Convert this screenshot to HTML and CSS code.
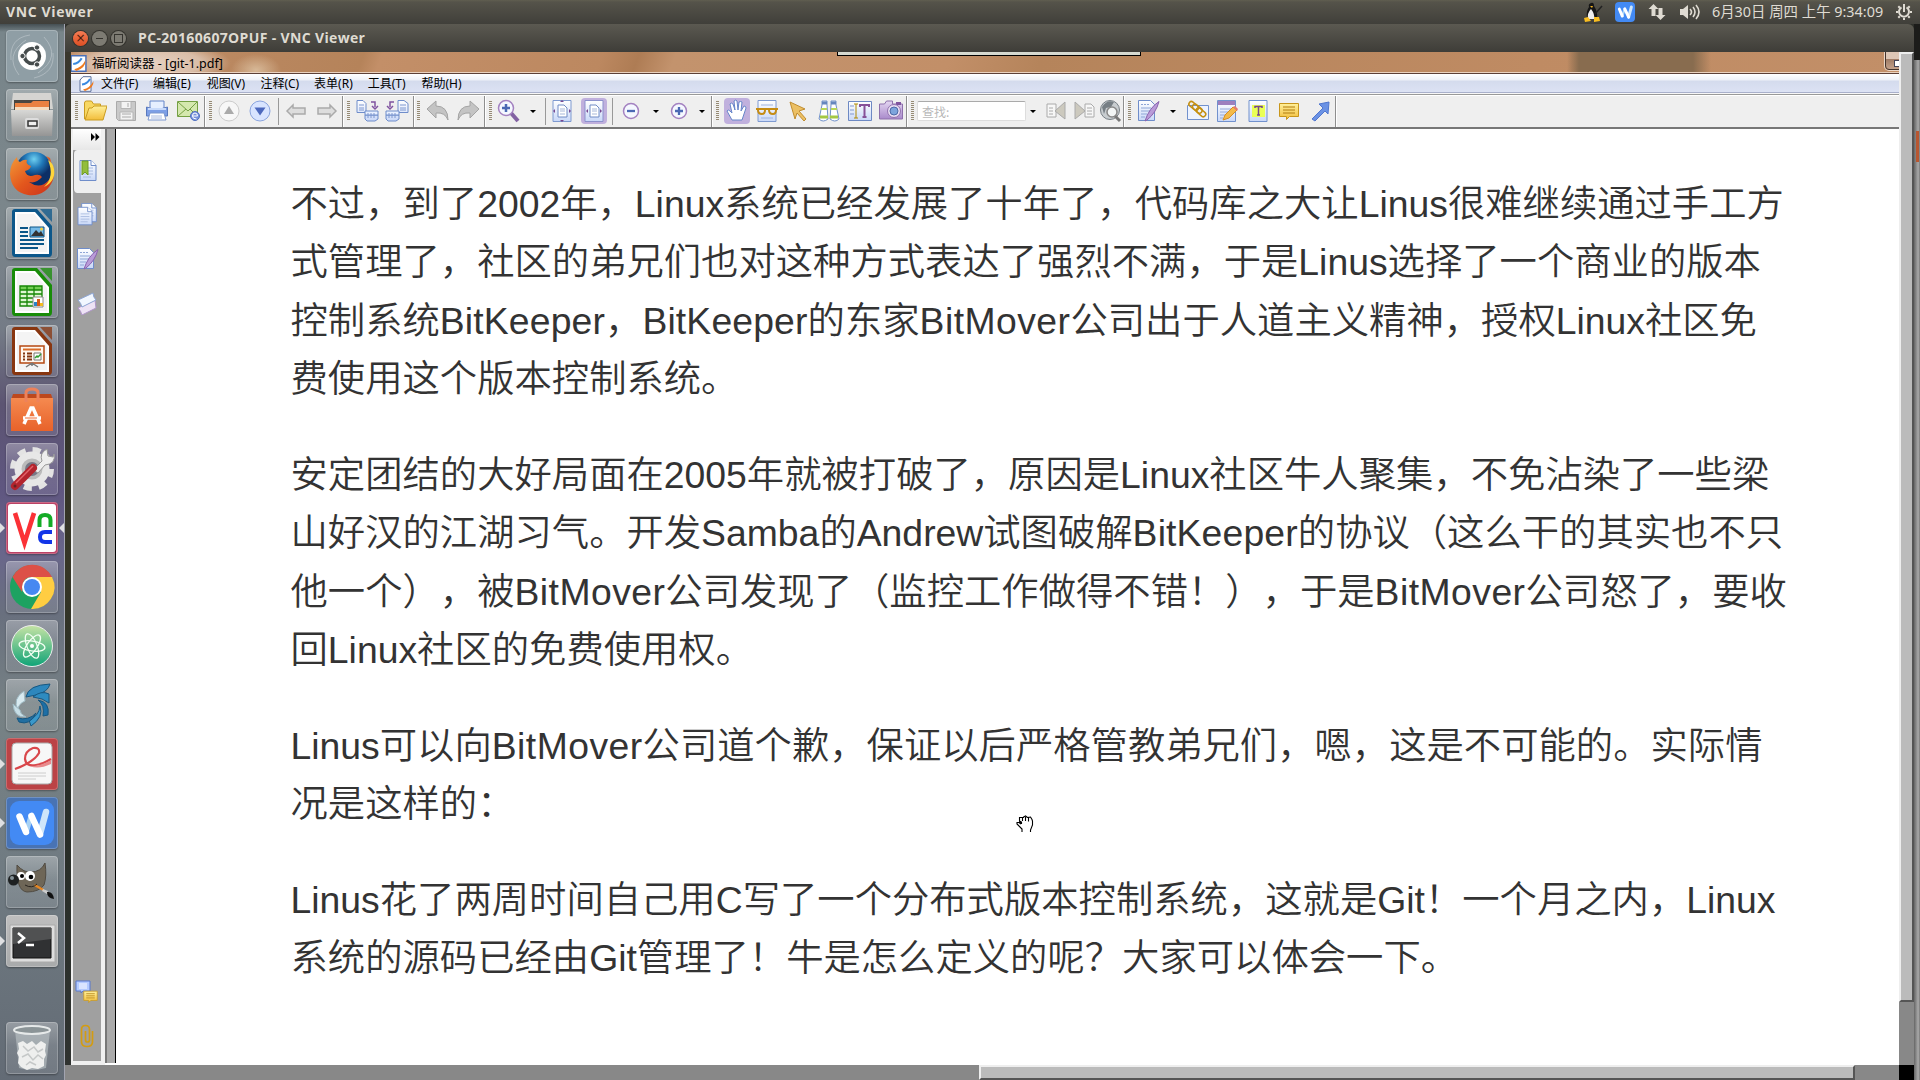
FILE: index.html
```html
<!DOCTYPE html>
<html lang="zh-CN">
<head>
<meta charset="utf-8">
<title>VNC Viewer</title>
<link rel="stylesheet" href="styles.css">
</head>
<body>
<svg class="defs" width="0" height="0">
  <defs>
    <linearGradient id="gBlue" x2="0" y2="1"><stop stop-color="#fff"/><stop offset="1" stop-color="#c9d8f8"/></linearGradient>
    <linearGradient id="gGold" x2="0" y2="1"><stop stop-color="#fff09a"/><stop offset="1" stop-color="#f2bd3a"/></linearGradient>
    <linearGradient id="gViolet" x2="0" y2="1"><stop stop-color="#e4d6f2"/><stop offset="1" stop-color="#a98acb"/></linearGradient>
    <linearGradient id="gOrange" x2="0" y2="1"><stop stop-color="#f58a50"/><stop offset="1" stop-color="#e8622a"/></linearGradient>
    <linearGradient id="gFox" x1="0" y1="0" x2="1" y2="1"><stop stop-color="#f39b38"/><stop offset=".5" stop-color="#e3571d"/><stop offset="1" stop-color="#c9301b"/></linearGradient>
    <radialGradient id="gGlobe" cx=".5" cy=".2"><stop stop-color="#6fd0f0"/><stop offset=".5" stop-color="#2078b8"/><stop offset="1" stop-color="#0c2f66"/></radialGradient>
    <linearGradient id="gAtom" x2="0" y2="1"><stop stop-color="#c5e3a4"/><stop offset="1" stop-color="#0fa377"/></linearGradient>
    <linearGradient id="gSteel" x2="0" y2="1"><stop stop-color="#d8d8d6"/><stop offset="1" stop-color="#959595"/></linearGradient>
    <symbol id="page" viewBox="0 0 24 24"><path d="M4 1.500h11l5 5v15H4z" fill="url(#gBlue)" stroke="#6f8dca"/><path d="M15 1.500v5h5" fill="#fff" stroke="#6f8dca"/><path d="M7 9h10M7 12h10M7 15h10M7 18h8" stroke="#a9bce0"/></symbol>
    <symbol id="pen" viewBox="0 0 24 24"><path d="M2.500 1.500h12l4 4v16h-16z" fill="url(#gBlue)" stroke="#6f8dca"/><path d="M5 5.500h2m1 0h2m1 0h2M5 9h10M5 12h9M5 15h6M5 18h4" stroke="#8fa6d6"/><path d="M23 2.500Q13 9 9 22l2-1Q20 14 23 2.500" fill="#b99bd8" stroke="#8a62ae"/></symbol>
    <symbol id="note" viewBox="0 0 24 24"><path d="M2.500 4.500h19v13h-9l-3 3v-3h-7z" fill="url(#gGold)" stroke="#c8961b"/><path d="M6 8h12M6 11h12M6 14h12" stroke="#b07d10"/></symbol>
    <symbol id="foxit" viewBox="0 0 16 16"><path d="M1 .700h14v14.600H1z" fill="#fff" stroke="#4a70b8" stroke-width="1.400"/><path d="M3 8.500Q8 8 11 3" fill="none" stroke="#3a8ae0" stroke-width="2"/><path d="M4 13.500Q11 12 14.500 5Q15 12 6 15" fill="#f07a1e"/></symbol>
    <symbol id="foxdoc" viewBox="0 0 16 16"><path d="M5 .700h8v14.600H2V4z" fill="#fff" stroke="#5b6f9a"/><path d="M4 8.500Q9 8 12 3" fill="none" stroke="#3a8ae0" stroke-width="2"/><path d="M5 13.500Q12 12 15.500 5Q16 12 7 15" fill="#f07a1e"/></symbol>
    <symbol id="sheet" viewBox="0 0 52 52"><path d="M9 2h22l15 17v27q0 4-3 4H9q-3 0-3-4V5q0-3 3-3z" fill="currentColor"/><path d="M9 5h20l14 16v26H9z" fill="#fff"/><path d="M11 7h17l13 15v23H11z" fill="#f4f4f4"/><path d="M34 2h12v13z" fill="currentColor" opacity=".75"/></symbol>
    <symbol id="wps" viewBox="0 0 44 44"><rect width="44" height="44" rx="9" fill="#438af4"/><path d="M16 32l5-17" stroke="#a8d2f5" stroke-width="5"/><path d="M9.500 15.500L16 31" stroke="#fff" stroke-width="6.500" stroke-linecap="round"/><path d="M30 33l6-22" stroke="#cfe6fa" stroke-width="6.500" stroke-linecap="round"/><path d="M21.500 15L30 33.500" stroke="#fff" stroke-width="6.500" stroke-linecap="round"/></symbol>
  </defs>
</svg>

<header class="panel">
  <span class="panel-title">VNC Viewer</span>
  <div class="indicators">
    <svg width="20" height="21" viewBox="0 0 20 21"><path d="M8 1q3-1 3 3 4 6 3 12H4Q3 9 6 5 5 2 8 1" fill="#151515"/><path d="M8 7q4 5 3 10H5Q4 11 8 7" fill="#eee"/><path d="M7 4h3l-1 2z" fill="#f5b622"/><path d="M1 16l4-1 3 4-6 1zM11 15h5l1 4-6 1z" fill="#f8bd21"/><path d="M12 12l7-8" stroke="#222" stroke-width="1.500"/></svg>
    <svg width="20" height="20"><use href="#wps"/></svg>
    <svg width="18" height="18" viewBox="0 0 18 18" fill="#dfdbd2"><path d="M5.500 1l5 5H7.500v7H3.500V6H.5zM12.500 17l-5-5h3V5h4v7h3z"/></svg>
    <svg width="20" height="18" viewBox="0 0 20 18"><path d="M0 6h3l5-4v14l-5-4H0z" fill="#dfdbd2"/><path d="M10 6q3 3 0 6M13 4q4 5 0 10M16 2q6 7 0 14" fill="none" stroke="#dfdbd2" stroke-width="1.600"/></svg>
    <span class="clock">6月30日 周四 上午 9:34:09</span>
    <svg width="18" height="18" viewBox="0 0 18 18" fill="none" stroke="#dfdbd2"><path d="M6.500 4.300a5 5 0 1 0 5 0M9 1v8" stroke-width="2"/><path d="M1 9h2m12 0h2M9 15v2M3.300 3.300l1.500 1.500m9.900-1.500l-1.500 1.500M3.300 14.700l1.500-1.500m9.900 1.500l-1.500-1.500" stroke-width="2"/></svg>
  </div>
</header>

<div class="desktop">
  <nav class="launcher">
    <div class="tile dash"><svg viewBox="0 0 52 52"><path d="M5 30Q3 8 24 5M47 23q2 20-19 25M13 45Q-2 25 20 10M38 7q18 20-6 36" fill="none" stroke="#c1cace" opacity=".6"/><circle cx="26" cy="26" r="14" fill="#fff"/><circle cx="26" cy="26" r="7.500" fill="none" stroke="#454b4c" stroke-width="3.500"/><g fill="#454b4c" stroke="#fff"><circle cx="16.500" cy="26" r="2.700"/><circle cx="31" cy="17.500" r="2.700"/><circle cx="31" cy="34.500" r="2.700"/></g></svg></div>
    <div class="tile"><svg viewBox="0 0 52 52"><path d="M7 4h38l2 16H5z" fill="#d5d4d1"/><path d="M8 11h36v12H8z" fill="#4a4641"/><path d="M9 14h16l2-2h16v10H9z" fill="#e98142"/><path d="M9 18h34v5H9z" fill="#f4dcc0"/><path d="M5 21h42l-1 26H6z" fill="url(#gSteel)"/><rect x="19" y="29" width="14" height="11" rx="2" fill="#ddd"/><path d="M22 32h9v5h-9z" fill="#eee" stroke="#333" stroke-width="1.500"/></svg></div>
    <div class="tile"><svg viewBox="0 0 52 52"><circle cx="28" cy="22" r="18" fill="url(#gGlobe)"/><path d="M40 8Q51 20 47 32 40 49 22 47 5 44 4 26 4 16 11 9q0 4 3 5 4-3 7-2-2 4 4 6-1 4-6 5 2 7 10 4 5-1 7 2-6 7-13 5 11 8 20-2 6-8 1-22z" fill="url(#gFox)"/><path d="M42 12q7 17-4 27 12-6 10-18-1-6-6-9" fill="#ffd63b"/></svg></div>
    <div class="tile writer"><svg viewBox="0 0 52 52"><use href="#sheet"/><path d="M14 21h8M14 25h8M14 29h8M14 33h24M14 37h24M14 41h18" stroke="#0a5688" stroke-width="2"/><path d="M24 20h14v10H24z" fill="#76bbe8" stroke="#0a5688"/><path d="M25 29l5-6 3 3 2-2 3 5z" fill="#333"/><circle cx="35.500" cy="22" r="1.500" fill="#f5cf3b"/></svg></div>
    <div class="tile calc"><svg viewBox="0 0 52 52"><use href="#sheet"/><path d="M14 20h22v20H14z" fill="#dff7d2"/><path d="M14 20h22v4H14z" fill="#73ce54"/><path d="M14 20h22v20H14zM14 24h22M14 28h22M14 32h22M14 36h22M21 20v20M28 20v20" fill="none" stroke="#168605" stroke-width="1.300"/><path d="M27 31h10v10H27z" fill="#fff" stroke="#888"/><path d="M28 36h3v4h-3z" fill="#2a82c8"/><path d="M31 33h3v7h-3z" fill="#d85a16"/><path d="M34 37h3v3h-3z" fill="#f3bb22"/></svg></div>
    <div class="tile impress"><svg viewBox="0 0 52 52"><use href="#sheet"/><path d="M14 21h24v17H14z" fill="#fff7ef" stroke="#b54812" stroke-width="1.500"/><path d="M17 24.500h18" stroke="#d96c2a" stroke-width="2"/><path d="M17 28.500h2m2 0h5M17 31.500h2m2 0h5M17 34.500h2m2 0h5" stroke="#81350f" stroke-width="2"/><path d="M28 28h7v7h-7z" fill="#fff" stroke="#777"/><path d="M29 33l2-2 1 1 3-3" fill="none" stroke="#2f9c2f" stroke-width="1.500"/><path d="M26 38l-6 4m6-4l6 4m-6-4v3" stroke="#777" stroke-width="1.500"/></svg></div>
    <div class="tile"><svg viewBox="0 0 52 52"><path d="M7 10h38l2 6H5z" fill="#bd481d"/><path d="M5 14h42v33H5z" fill="url(#gOrange)"/><path d="M20 18V9q0-4 6-4t6 4v9" fill="none" stroke="#ed825b" stroke-width="3"/><path d="M17 34h18M18 40l7-16h2l7 16" fill="none" stroke="#fff" stroke-width="3.500"/><path d="M19 34h12" stroke="#f06c36"/></svg></div>
    <div class="tile"><svg viewBox="0 0 52 52"><circle cx="26" cy="26" r="19" fill="none" stroke="#e3e3e3" stroke-width="6" stroke-dasharray="8 6.920"/><circle cx="26" cy="26" r="14" fill="#bbb" stroke="#e7e7e7" stroke-width="7"/><circle cx="26" cy="26" r="7" fill="#777785"/><path d="M27 27l9-9q-3-8 5-12l1 7 5 1 1-3q2 10-9 11l-7 8z" fill="#eee" stroke="#999"/><path d="M9 43l18-18" stroke="#b3242d" stroke-width="8" stroke-linecap="round"/><path d="M10 40l17-17" stroke="#e4636a" stroke-width="1.500"/><circle cx="9" cy="43" r="1.500" fill="#622"/></svg></div>
    <div class="tile vnc running active"><svg viewBox="0 0 52 52"><rect x="2" y="2" width="48" height="48" rx="3" fill="#fff"/><path d="M9 11l9.500 30L28 11" fill="none" stroke="#fb3136" stroke-width="4.600"/><path d="M33.500 25v-7q0-5 5.500-5t5.500 5v7" fill="none" stroke="#14ab26" stroke-width="4"/><path d="M46 30h-7q-5 0-5 5t5 5h7" fill="none" stroke="#1235e8" stroke-width="4"/></svg></div>
    <div class="tile"><svg viewBox="0 0 52 52"><circle cx="26" cy="26" r="22" fill="#1da261"/><path d="M26 16h20a22 22 0 0 1-21 32l10-17z" fill="#ffcd42"/><path d="M6.500 16A22 22 0 0 1 46 16H26q-7 0-9 6l-1 9z" fill="#dc5047"/><circle cx="26" cy="26" r="10" fill="#fff"/><circle cx="26" cy="26" r="8" fill="#4688f1"/></svg></div>
    <div class="tile"><svg viewBox="0 0 52 52"><circle cx="26" cy="26" r="20.500" fill="url(#gAtom)" stroke="#eee"/><g fill="none" stroke="#f3fff3" stroke-width="1.300"><ellipse cx="26" cy="26" rx="13" ry="5" transform="rotate(8 26 26)"/><ellipse cx="26" cy="26" rx="13" ry="5" transform="rotate(68 26 26)"/><ellipse cx="26" cy="26" rx="13" ry="5" transform="rotate(125 26 26)"/></g><circle cx="26" cy="26" r="2" fill="#fff"/></svg></div>
    <div class="tile"><svg viewBox="0 0 52 52" stroke="#175780"><path d="M20 18Q22 6 44 5q-2 8-14 11z" fill="#2d87bd"/><path d="M27 18q8-7 16-3v9q-6-5-16-6" fill="#2e8bc0"/><path d="M32 21q12 2 10 15l-5 1q2-11-5-16" fill="#1d6fa6"/><path d="M34 27q4 11-9 20l-2-6q10-4 11-14" fill="#3998ca"/><path d="M30 34Q24 47 13 43l-2-4q12 3 19-5" fill="#226fa1"/><path d="M18 12q-12 8-6 19 0-6 7-9z" fill="#d8eaf0" stroke="#9eb9c3"/><path d="M7 25q1 14 13 13-6-3-6-7z" fill="#c7dee6" stroke="#9eb9c3"/></svg></div>
    <div class="tile red running"><svg viewBox="0 0 52 52"><rect x="6" y="5" width="40" height="41" rx="4" fill="#f7f7f7" stroke="#aaa"/><path d="M9 31Q28 24 33 15q1-6-6-5-8 3-8 11 1 8 11 6 7-1 15-6" fill="none" stroke="#d9474b" stroke-width="2.200"/><path d="M24 28q9 1 21-6v4q-13 6-21 2" fill="#e88a8c"/><path d="M12 35h28M12 38h28M12 41h18" stroke="#ccc"/></svg></div>
    <div class="tile blue running"><svg viewBox="-4 -4 52 52"><use href="#wps" width="44" height="44"/></svg></div>
    <div class="tile"><svg viewBox="0 0 52 52"><path d="M11 9q7 8 14 7 10 0 14-9 2 13-1 22-5 7-17 7-11-1-10-27" fill="#6e6657" stroke="#504b42"/><circle cx="15" cy="20" r="4" fill="#fff"/><circle cx="24" cy="20" r="5" fill="#fff"/><circle cx="16" cy="20" r="2"/><circle cx="25" cy="21" r="2.300"/><circle cx="7.500" cy="24" r="5.500" fill="#1d2021"/><circle cx="6" cy="22" r="2" fill="#839096"/><path d="M29 28l9 5-1 2-9-5z" fill="#e88721"/><path d="M37 33l5 2-1 3-5-3z" fill="#ccc"/><path d="M41 36q6-1 7 7-7-1-7-7" fill="#101010"/><path d="M19 29q7 4 12-1" fill="none" stroke="#28241f"/></svg></div>
    <div class="tile term running"><svg viewBox="0 0 52 52"><path d="M4 10h45v37H4z" fill="#ddd" stroke="#aaa"/><path d="M7 13h38v30H7z" fill="#303133" stroke="#111"/><path d="M7 13h38v11L7 29z" fill="#505152"/><path d="M12 18l6 5-6 5M20 30h8" fill="none" stroke="#fff" stroke-width="2.500"/></svg></div>
    <div class="tile trash"><svg viewBox="0 0 52 52"><path d="M9 8l4 38q13 4 27 0l4-38" fill="#bac2c4" opacity=".65"/><ellipse cx="26" cy="8" rx="18" ry="4" fill="#8b9497" stroke="#e6e9e9" stroke-width="2"/><path d="M12 21l5-2 4 3 5-3 4 4 5-4 5 3-1 7 1 4-2 4v7l-6 3-6-1-5 2-6-3-3-4 1-6-2-4 2-4z" fill="#eeefee"/><path d="M17 24l5 5 6-4 4 5 5-3M16 35l6-3 5 6 5-5 5 4M20 43l4-3 6 3" fill="none" stroke="#c5c8c8" stroke-width="1.500"/></svg></div>
  </nav>

  <main class="window">
    <div class="titlebar"><i class="wb close"></i><i class="wb min"></i><i class="wb max"></i><span class="window-title">PC-20160607OPUF - VNC Viewer</span></div>
    <div class="viewport">
      <div class="remote">
        <div class="caption"><svg width="17" height="17"><use href="#foxit"/></svg><span>福昕阅读器 - [git-1.pdf]</span><i class="handle"></i><i class="minbtn"></i></div>
        <div class="menubar"><svg width="16" height="16"><use href="#foxdoc"/></svg><span>文件(F)</span><span>编辑(E)</span><span>视图(V)</span><span>注释(C)</span><span>表单(R)</span><span>工具(T)</span><span>帮助(H)</span></div>
        <div class="toolbar">
          <div class="group g1"><i class="grip"></i>
            <svg viewBox="0 0 24 24"><path d="M1.500 20V4q0-2 2-2h5l2 3h7v4" fill="#f8d862" stroke="#c99b20"/><path d="M2 21l4-12h3l2-2h13l-4 14z" fill="url(#gGold)" stroke="#c99b20"/></svg>
            <svg viewBox="0 0 24 24"><path d="M2.500 2.500h19v19h-17l-2-2z" fill="#c9c9c9" stroke="#aaa"/><path d="M7 2.500h10v7H7zM6 13h13v8H6z" fill="#f3f3f3" stroke="#b5b5b5"/><path d="M14 4v4M8 15h9M8 18h9" stroke="#aaa"/></svg>
            <svg viewBox="0 0 24 24"><path d="M5 2h14v8H5z" fill="#e6efff" stroke="#6585c8"/><path d="M1.500 8q10 4 21 0v9h-21z" fill="#7d9fe6" stroke="#5a79bd"/><path d="M3 10h18" stroke="#c8dafa" stroke-width="2"/><path d="M5 14h14l2 7H3z" fill="#fff" stroke="#7c97cf"/><path d="M6 17h11M6 19h11" stroke="#aabbe0"/></svg>
            <svg viewBox="0 0 24 24"><path d="M1.500 2.500h20v15h-20z" fill="#d5e8ae" stroke="#75a044"/><path d="M2 3l10 9 9-9M2 17l8-7m11 7l-7-7" fill="none" stroke="#75a044"/><circle cx="19" cy="17" r="4.500" fill="#7792dc" stroke="#4f6fbe"/><path d="M16.500 17h5q0-3-2.500-3t-2.500 3 4 3" fill="none" stroke="#fff"/></svg>
          </div>
          <div class="group g2"><i class="grip"></i>
            <svg viewBox="0 0 24 24"><circle cx="12" cy="12" r="10" fill="#f7f7f7" stroke="#ccc"/><path d="M7 15l5-8 5 8z" fill="#aaa"/></svg>
            <svg viewBox="0 0 24 24"><circle cx="12" cy="12" r="10" fill="#d8e4ff" stroke="#8aa4de"/><path d="M6.500 8.500h11L12 16.500z" fill="#4c68bd"/></svg><i class="rule"></i>
            <svg viewBox="0 0 24 24"><path d="M3 12l6-6v3h12v6H9v3z" fill="#ddd" stroke="#aaa" stroke-width="1.500"/></svg>
            <svg viewBox="0 0 24 24"><path d="M21 12l-6-6v3H3v6h12v3z" fill="#ddd" stroke="#aaa" stroke-width="1.500"/></svg>
          </div>
          <div class="group g3"><i class="grip"></i>
            <svg viewBox="0 0 24 24"><path d="M2 1.500h6l3 3v9H2zM10 16h13v4l-3 2h-8l-2-2z" fill="url(#gBlue)" stroke="#6f8dca"/><path d="M10 12h13v4H10z" fill="#e8f0ff" stroke="#6f8dca"/><path d="M4 6h5M4 9h5M4 11h5M13 14v5m3-5v5m3-5v5" stroke="#7e98d0"/><path d="M16 3h4v5m-3-1l3 3 3-3" fill="none" stroke="#8053a0" stroke-width="1.500"/></svg>
            <svg viewBox="0 0 24 24"><path d="M13 1.500h6l4 3v9H13zM1 16h13v4l-3 2H3l-2-2z" fill="url(#gBlue)" stroke="#6f8dca"/><path d="M1 12h13v4H1z" fill="#e8f0ff" stroke="#6f8dca"/><path d="M15 6h6M15 9h6M15 11h6M4 14v5m3-5v5m3-5v5" stroke="#7e98d0"/><path d="M9 3H5v5m3-1l-3 3-3-3" fill="none" stroke="#8053a0" stroke-width="1.500"/></svg>
          </div>
          <div class="group g4"><i class="grip"></i>
            <svg viewBox="0 0 24 24"><path d="M1 10l9-8v5q12 0 12 14-3-8-12-7v5z" fill="#c4c4c4" stroke="#a4a4a4"/></svg>
            <svg viewBox="0 0 24 24"><path d="M23 10l-9-8v5Q2 7 2 21q3-8 12-7v5z" fill="#c4c4c4" stroke="#a4a4a4"/></svg>
          </div>
          <div class="group g5"><i class="grip"></i>
            <svg viewBox="0 0 24 24"><path d="M14 14l7 8" stroke="#8261a2" stroke-width="4"/><circle cx="9" cy="9" r="7.500" fill="#f5f8ff" stroke="#a482c1" stroke-width="1.500"/><path d="M5 9h8M9 5v8" stroke="#4b69b4" stroke-width="2.500"/></svg><i class="caret"></i><i class="rule"></i>
            <svg viewBox="0 0 24 24"><path d="M3 1.500h18v21H3z" fill="url(#gBlue)" stroke="#7e9ad0"/><path d="M8 6h6l3 3v9H8z" fill="#fff" stroke="#718cc5"/><path d="M10 10h5M10 12h5M10 15h5" stroke="#a7b8d9"/><path d="M10 3h4l-2-2zM10 21h4l-2 2zM5 10v4l-2-2zM19 10v4l2-2z" fill="#774991"/></svg>
            <svg class="on" viewBox="0 0 24 24"><path d="M3 1.500h18v21H3z" fill="url(#gBlue)" stroke="#8c91cc"/><path d="M8 6h6l3 3v9H8z" fill="#fff" stroke="#718cc5"/><path d="M10 10h5M10 12h5M10 15h5" stroke="#a7b8d9"/><path d="M6 10v4l-2-2zM18 10v4l2-2z" fill="#774991"/></svg><i class="rule"></i>
            <svg viewBox="0 0 24 24"><circle cx="12" cy="12" r="7.500" fill="#f5f8ff" stroke="#a482c1" stroke-width="1.500"/><path d="M8 12h8" stroke="#4b69b4" stroke-width="2.300"/></svg><i class="caret"></i>
            <svg viewBox="0 0 24 24"><circle cx="12" cy="12" r="7.500" fill="#f5f8ff" stroke="#a482c1" stroke-width="1.500"/><path d="M8 12h8M12 8v8" stroke="#4b69b4" stroke-width="2.300"/></svg><i class="caret"></i>
          </div>
          <div class="group g6"><i class="grip"></i>
            <svg class="on" viewBox="0 0 24 24"><path d="M7 21l-5-9q1-2 3 0l2 2L5 5q1-2 3 0l2 6-1-9q2-2 3 0l1 9 1-8q2-1 3 0l-1 9 3-5q2 0 2 2l-4 12z" fill="#fff" stroke="#6686c9"/></svg>
            <svg viewBox="0 0 24 24"><path d="M3 1.500h18v21H3z" fill="url(#gBlue)" stroke="#7e9ad0"/><path d="M6 6h12M6 19h12" stroke="#9fb4de"/><path d="M1 10h22M3 11q0 4 4 4 3 0 3-4m4 0q0 4 4 4 3 0 3-4" fill="none" stroke="#c58c13" stroke-width="2"/></svg>
            <svg viewBox="0 0 24 24"><path d="M4 3l15 7-6 2 7 8-2 2-7-8-2 6z" fill="#ecc064" stroke="#c18d30"/></svg>
            <svg viewBox="0 0 24 24"><path d="M5 2h5v4l1 14q-5 4-9 0L5 6zm9 0h5v4l3 14q-4 4-9 0l1-14z" fill="#fff" stroke="#7191ca"/><path d="M4 10h6M14 10h6" stroke="#b8d65b" stroke-width="2"/><path d="M3 18h8M13 18h8" stroke="#a4c845" stroke-width="3"/><path d="M5 4h5m4 0h5" stroke="#6586be" stroke-width="3"/></svg>
            <svg viewBox="0 0 24 24"><path d="M.5 2.500h23v19H.5z" fill="url(#gBlue)" stroke="#6d89c3"/><path d="M2 7h4M2 11h4M2 15h4" stroke="#8299cf"/><path d="M8 5v14M6 5h4M6 19h4" stroke="#b18a00"/><path d="M12 8V6h9v2m-4.500-2v12m-2 0h4" fill="none" stroke="#875198" stroke-width="2"/></svg>
            <svg viewBox="0 0 24 24"><path d="M.5 5h5l2-3h6v3h10v15H.5z" fill="url(#gViolet)" stroke="#8e71ac"/><path d="M17 3h5v3h-5z" fill="#80559f"/><circle cx="15" cy="12" r="6.500" fill="#e8ddf2" stroke="#9273ae"/><circle cx="15" cy="12" r="4" fill="#7da4dc" stroke="#4d6aa7"/></svg>
          </div>
          <div class="group g7"><i class="grip"></i><span class="search">查找:</span><i class="caret"></i>
            <svg viewBox="0 0 24 24"><path d="M3 5h9v13H3z" fill="#f7f7f7" stroke="#aaa"/><path d="M5 9h4M5 12h4M5 15h4" stroke="#aaa"/><path d="M11 12l10-9v17z" fill="#ccc9be" stroke="#aaa"/></svg>
            <svg viewBox="0 0 24 24"><path d="M13 5h6l3 3v10h-9z" fill="#f7f7f7" stroke="#aaa"/><path d="M15 9h5M15 12h5M15 15h5" stroke="#aaa"/><path d="M13 12L3 3v17z" fill="#ccc9be" stroke="#aaa"/></svg>
            <svg viewBox="0 0 24 24"><circle cx="12" cy="11" r="9.500" fill="#c8cdd0" stroke="#777f85"/><path d="M4 8q5-8 12-5l-3 5-5 1-2 6z" fill="#777f85"/><path d="M16 16l6 6" stroke="#777" stroke-width="3"/><circle cx="14" cy="13" r="5" fill="#f2f5f5" stroke="#888" stroke-width="1.500"/></svg>
          </div>
          <div class="group g8"><i class="grip"></i>
            <svg><use href="#pen"/></svg><i class="caret"></i>
            <svg viewBox="0 0 24 24"><path d="M1.500 6.500h21v14h-21z" fill="#edf3ff" stroke="#7191cd"/><g fill="none" stroke="#c59012" stroke-width="1.500"><rect x="2" y="4" width="11" height="5" rx="2.500" transform="rotate(40 7 7)"/><rect x="5.500" y="7" width="11" height="5" rx="2.500" transform="rotate(40 11 10)"/><rect x="9" y="11" width="11" height="5" rx="2.500" transform="rotate(40 15 14)"/></g></svg>
            <svg viewBox="0 0 24 24"><path d="M2.500 1.500h18v21h-18z" fill="url(#gBlue)" stroke="#7191cd"/><path d="M3 2h17v4H3z" fill="#9d7fbe"/><path d="M5 10h11M5 13h8M5 16h5M5 19h3" stroke="#94aada"/><path d="M8 21l2-5 8-8 4 3-8 8z" fill="#f4ba48" stroke="#d48f24"/><path d="M18 8l2-1 3 3-1 2z" fill="#e57871"/></svg>
            <svg viewBox="0 0 24 24"><path d="M3 1.500h18v21H3z" fill="url(#gBlue)" stroke="#7191cd"/><path d="M6 6h13v12H6z" fill="#eaff55"/><path d="M9 9V7.500h7V9m-3.500-1v8m-1.500 0h3" fill="none" stroke="#75468d" stroke-width="1.500"/></svg>
            <svg><use href="#note"/></svg>
            <svg viewBox="0 0 24 24"><path d="M4 20L15 9l-4-4 10-2-1 12-3-3L7 22z" fill="#6b92e4" stroke="#5177cf"/></svg>
          </div>
        </div>
        <div class="work">
          <aside class="side">
            <div class="expand"><svg width="9" height="8" viewBox="0 0 9 8"><path d="M0 0l4 4-4 4zM4.500 0l4 4-4 4z"/></svg></div>
            <div class="tabs">
              <div class="tab sel"><svg viewBox="0 0 24 24"><use href="#page"/><path d="M6 2h6v14l-3-3-3 3z" fill="#93bd3c" stroke="#6f9c22"/></svg></div>
              <div class="tab"><svg viewBox="0 0 24 24"><use href="#page" x="3" y="-1" width="22" height="22"/><use href="#page" x="-1" y="3" width="22" height="21"/></svg></div>
              <div class="tab"><svg><use href="#pen"/></svg></div>
              <div class="tab"><svg viewBox="0 0 24 24"><path d="M3 17l4-2 13-6 1 8-14 7q-1-4-4-7" fill="#eee3f5" stroke="#ae94c8"/><path d="M3 9L18 2q0 4 3 7L7 16q-1-4-4-7" fill="#f2f7ff" stroke="#8da5d4"/></svg></div>
              <div class="tab push"><svg viewBox="0 0 24 24"><path d="M1 1h14v10H8l-2 2v-2H1z" fill="#b4cbff" stroke="#5979cc"/><path d="M4 4h8M4 6h8M4 8h8" stroke="#fff"/><use href="#note" x="7" y="8" width="17" height="17"/></svg></div>
              <div class="tab clip"><svg viewBox="0 0 24 24" fill="none" stroke="#d39c12" stroke-width="1.700"><path d="M17.500 7v11q0 4.500-5.500 4.500T6.500 18V5.500q0-4 4-4t4 4V16q0 2-2 2t-2-2V7"/></svg></div>
            </div>
          </aside>
          <article class="doc">
            <p>不过，到了2002年，Linux系统已经发展了十年了，代码库之大让Linus很难继续通过手工方<br>式管理了，社区的弟兄们也对这种方式表达了强烈不满，于是Linus选择了一个商业的版本<br>控制系统<span class="keeper">BitKeeper</span>，<span class="keeper">BitKeeper</span>的东家<span class="mover">BitMover</span>公司出于人道主义精神，授权Linux社区免<br>费使用这个版本控制系统。</p>
            <p>安定团结的大好局面在2005年就被打破了，原因是Linux社区牛人聚集，不免沾染了一些梁<br>山好汉的江湖习气。开发Samba的Andrew试图破解<span class="keeper">BitKeeper</span>的协议（这么干的其实也不只<br>他一个），被<span class="mover">BitMover</span>公司发现了（监控工作做得不错！），于是<span class="mover">BitMover</span>公司怒了，要收<br>回Linux社区的免费使用权。</p>
            <p>Linus可以向<span class="mover">BitMover</span>公司道个歉，保证以后严格管教弟兄们，嗯，这是不可能的。实际情<br>况是这样的：</p>
            <p>Linus花了两周时间自己用C写了一个分布式版本控制系统，这就是Git！一个月之内，Linux<br>系统的源码已经由Git管理了！牛是怎么定义的呢？大家可以体会一下。</p>
            <svg class="cursor" width="18" height="18" viewBox="0 0 18 18"><path d="M6 17v-3L1 9V7h2l2 2-2-5 2-1 2 4V2l2-1 1 5V1h2l1 5 1-3h2v7l-2 5v2" fill="#fff"/><path d="M6 17v-3L1 9V7.500h2L5 9 3.500 6V2.500h4V2l2-1 2 1.500 3-.5 1.500 2.500.5 1.500v4l-2 5v2M6.500 3v3M9.500 2v4M12.500 2.500v4M3.500 6l2 1v2" fill="none" stroke="#000" stroke-width="1.100"/></svg>
          </article>
        </div>
      </div>
      <div class="vscroll"><i></i></div>
      <div class="hscroll"><i></i></div>
      <div class="corner"></div>
    </div>
  </main>
  <div class="behind"><i></i></div>
</div>
</body>
</html>
```
FILE: styles.css
```css
* { box-sizing: border-box; }
html, body { margin: 0; width: 1920px; height: 1080px; overflow: hidden; }
body { display: flex; flex-direction: column; background: #2f302b; font-family: "Noto Sans", "Noto Sans CJK SC", sans-serif; }
svg { display: block; flex: none; }
i { display: block; font-style: normal; }
.defs { position: absolute; }

.panel { flex: none; height: 24px; padding: 0 7px 0 6px; display: flex; align-items: center; justify-content: space-between; background: linear-gradient(#605e50 0, #55534a 2px, #403f3a 100%); color: #dfdbd2; }
.panel-title { font: bold 14px/24px "Open Sans", sans-serif; letter-spacing: .62px; }
.indicators { display: flex; align-items: center; font-size: 14.400px; }
.indicators svg:nth-of-type(1) { margin-right: 12px; }
.indicators svg:nth-of-type(2) { margin-right: 13px; }
.indicators svg:nth-of-type(3) { margin-right: 14px; }
.indicators svg:nth-of-type(4) { margin-right: 12px; }
.clock { width: 171px; margin-right: 12px; line-height: 24px; white-space: nowrap; }

.desktop { flex: 1; min-height: 0; display: flex; }
.launcher { flex: none; width: 65px; padding: 6px 0 0 6px; display: flex; flex-direction: column; gap: 7px; border-right: 1px solid #a2a4b0; background: linear-gradient(#454f53 0, #78858a 8px, #7b868b 18%, #747b86 29%, #5c5472 36%, #5f5680 44%, #69668b 50%, #69707e 56%, #778285 65%, #707b82 80%, #636b75 100%); }
.tile { flex: none; position: relative; width: 52px; height: 52px; border-radius: 4px; background: linear-gradient(#ffffff50, #ffffff22 45%, #ffffff18); box-shadow: inset 0 0 0 1px #ffffff38, 0 1px 2px #0005; }
.tile svg { width: 52px; height: 52px; }
.dash { background: #8f9ea5; }
.writer { color: #0c578a; } .calc { color: #188c08; } .impress { color: #883610; }
.vnc { background: #bc4266; } .red { background: #bb4346; } .blue { background: #4873b4; }
.term { background: linear-gradient(#bfbfbf, #a8aaab); }
.trash { margin-top: 48px; }
.running::before { content: ""; position: absolute; left: -6px; top: 21px; border: 5px solid transparent; border-left-color: #dfe0e2; border-right: 0; }
.active::after { content: ""; position: absolute; right: -6px; top: 21px; border: 5px solid transparent; border-right-color: #dfe0e2; border-left: 0; }

.window { flex: none; width: 1849px; display: flex; flex-direction: column; }
.titlebar { flex: none; height: 28px; padding-left: 8px; display: flex; align-items: center; border-radius: 6px 6px 0 0; background: linear-gradient(#5b5951, #3e3d38); color: #dfdbd2; }
.window-title { margin-left: 8px; font: bold 14px/28px "Open Sans", sans-serif; letter-spacing: .35px; white-space: nowrap; }
.wb { width: 15px; height: 15px; margin-right: 4px; border-radius: 50%; background: #7d7b73; box-shadow: 0 0 0 1px #34332e; display: flex; align-items: center; justify-content: center; }
.wb.close { background: linear-gradient(#f67c54, #dd4f24); }
.wb.close::before { content: "×"; font: 12px/12px "DejaVu Sans", sans-serif; color: #4a1b0b; }
.wb.min::before { content: ""; width: 7px; height: 1px; background: #35342f; }
.wb.max::before { content: ""; width: 7px; height: 7px; border: 1px solid #35342f; }
.viewport { flex: 1; min-height: 0; display: grid; grid-template: 1013px 15px / 1828px 15px; padding-left: 6px; background: linear-gradient(#3a372d, #303026 30%, #363627 50%, #262c26 70%, #303331); }

.remote { display: flex; flex-direction: column; background: #fff; overflow: hidden; }
.caption { flex: none; position: relative; height: 22px; padding: 1px 0 0; display: flex; align-items: center; gap: 5px; font: 12.500px/19px "Noto Sans", "Noto Sans CJK SC", sans-serif; border-bottom: 1px solid #5c4037; box-shadow: inset 0 -1px #ead2bf; background: radial-gradient(ellipse 85px 22px at 75px 11px, #e8d3c4 0, #e1cab9cc 65%, transparent), radial-gradient(ellipse 25px 16px at 185px 18px, #d7b897, transparent), linear-gradient(90deg, transparent 1496px, #886c4f 1508px 1622px, transparent 1640px), linear-gradient(110deg, #c08e68 0, #b5835a 16%, #c38f68 17%, #bc8860 29%, #ae7c54 31%, #c3936d 33%, #c28f68 48%, #b5845b 53%, #bf8b63 80%, #c28f68); }
.caption svg { margin-left: -1px; }
.handle { position: absolute; left: 766px; top: 0; width: 304px; height: 4px; background: #d6d9d0; border: 1px solid #000; border-width: 0 1px 1px; }
.minbtn { position: absolute; right: -8px; top: -4px; width: 22px; height: 22px; border: 1px solid #44342c; border-radius: 4px; box-shadow: 0 0 0 1px #ecd8c9; background: linear-gradient(#ddc6b5 50%, #9f7b65 50%, #c3a18a); }
.minbtn::after { content: ""; position: absolute; left: 8px; top: 11px; width: 12px; height: 5px; background: #fff; border: 1px solid #445; }
.menubar { flex: none; height: 22px; padding: 0 0 2px 7px; display: flex; align-items: center; background: linear-gradient(#fff 0, #eef1f8 6px, #d4dbed 7px, #dce2f4 18px, #a9b0cb 18px, #a9b0cb 19px, #f7f7f7 19px, #f7f7f7 20px, #999 20px, #999 21px, #fff 21px); font: 12px/18px "Noto Sans", "Noto Sans CJK SC", sans-serif; color: #000; }
.menubar svg { margin-right: 7px; }
.menubar span { width: 53.700px; white-space: nowrap; }
.menubar span:first-of-type { width: 52px; }

.toolbar { flex: none; height: 33px; padding-left: 1px; display: flex; background: #efefef; border-bottom: 2px solid #777; }
.group { display: grid; align-items: center; justify-items: center; padding-bottom: 1px; border-right: 1px solid #8e8e8e; box-shadow: 1px 0 #fff; }
.group svg { width: 24px; height: 24px; }
.g1 { grid-template-columns: 8px repeat(3, 31px) 31px; }
.g1 svg { margin-left: -2px; }
.g2 { grid-template-columns: 10px 28px 34px 3px 32px 30px; }
.g3 { grid-template-columns: 10px 28px 32px; }
.g4 { grid-template-columns: 9px 29px 32px; }
.g5 { grid-template-columns: 10px 27px 22px 2px 32px 32px 4px 33px 18px 28px 18px; }
.g6 { grid-template-columns: 10px 29px repeat(5, 31px); }
.g7 { grid-template-columns: 10px 109px 14px 31px 25px 27px; }
.g8 { grid-template-columns: 10px 28px 22px 27px repeat(4, 31px); }
.grip { width: 3px; height: 20px; background: repeating-linear-gradient(#968b75 0 1px, #efefef 1px 2px); }
.rule { width: 1px; height: 27px; background: #999; }
.caret { border: 3px solid transparent; border-top-color: #000; border-bottom: 0; }
.group .on { background: #c0b0dd; border-radius: 3px; box-shadow: 0 0 0 1px #c0b0dd; }
.search { width: 109px; height: 20px; padding-left: 4px; background: #fff; border: 1px solid #ddd; border-top-color: #aaa; border-radius: 2px; color: #b8b8b8; font: 12px/19px "Noto Sans CJK SC", sans-serif; }

.work { flex: 1; min-height: 0; display: flex; }
.side { flex: none; width: 34px; display: flex; flex-direction: column; border: solid #f0f0f0; border-width: 0 4px 4px 2px; }
.expand { height: 21px; flex: none; display: flex; justify-content: flex-end; padding: 4px 1px; background: linear-gradient(#fff, #e7e7e7); }
.tabs { flex: 1; min-height: 0; display: flex; flex-direction: column; background: #a0a0a0; }
.tab { flex: none; height: 44px; display: flex; align-items: center; justify-content: center; }
.tab svg { width: 24px; height: 24px; }
.sel { height: 43px; padding-bottom: 2px; background: #efefef; border-left: 1px solid #888; border-radius: 4px 0 0 4px; }
.push { height: 39px; margin-top: auto; }
.clip { height: 50px; }
.doc { flex: 1; position: relative; padding: 46px 0 0 174.500px; border-left: 11px solid #aaa; border-image: linear-gradient(90deg, #777 0 2px, #aaa 2px 10px, #000 10px) 0 0 0 11; border-bottom: 2px solid #eee; color: #333; font: 350 37.330px/58.400px "Liberation Sans", "Noto Sans CJK SC", sans-serif; font-kerning: none; white-space: nowrap; text-spacing-trim: space-all; text-autospace: no-autospace; }
.doc p { margin: 0 0 37.200px; }
.keeper { letter-spacing: .14px; }
.mover { letter-spacing: .45px; }
.cursor { position: absolute; left: 900px; top: 686px; }

.vscroll { background: #888; }
.vscroll i { height: 950px; background: #bbb; border: 2px solid; border-color: #eee #555 #555 #eee; }
.hscroll { background: #888; margin-left: -6px; }
.hscroll i { width: 876px; height: 15px; margin-left: 914px; background: #bbb; border: 2px solid; border-color: #eee #555 #555 #eee; }
.corner { background: #000; }
.behind { flex: 1; padding: 107px 1px 0 2px; background: linear-gradient(#1c1c1a 36px, transparent 36px), linear-gradient(90deg, #666, #aaa 70%, #777); }
.behind i { height: 31px; background: #b85630; }
```
